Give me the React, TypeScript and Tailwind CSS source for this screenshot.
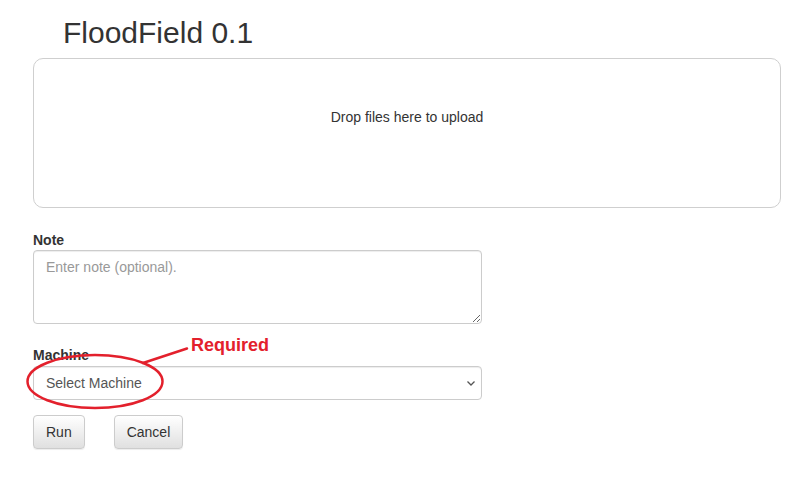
import React from 'react';

const Annotation = () => (
  <div className="pointer-events-none absolute inset-0">
    <svg className="absolute left-0 top-0" width="807" height="480" viewBox="0 0 807 480" fill="none">
      <ellipse cx="95" cy="381.5" rx="67.5" ry="26.5" stroke="#e3202c" strokeWidth="2.5" />
      <path d="M143 363 L187 348.5" stroke="#e3202c" strokeWidth="2.5" strokeLinecap="round" />
    </svg>
    <span className="absolute left-[191px] top-[334px] text-[18px] font-bold leading-[22px] text-[#e3202c]">
      Required
    </span>
  </div>
);

export default function App() {
  return (
    <div className="relative h-[480px] w-[807px] overflow-hidden bg-white font-['Liberation_Sans',Arial,sans-serif] text-[14px] text-[#333]">
      <div className="w-[748px] pl-[33px] box-content">
        <h1 className="mt-4 mb-[9px] pl-[30px] text-[30px] leading-[33px] font-normal text-[#333]">FloodField 0.1</h1>

        <div className="flex h-[150px] items-center justify-center rounded-[10px] border border-[#cfcfcf] pb-[32px]">
          <span className="text-[14px] text-[#333]">Drop files here to upload</span>
        </div>

        <div className="mt-[22px] w-[449px]">
          <label className="block text-[14px] font-bold leading-[20px] text-[#333]">Note</label>
          <textarea
            className="block h-[74px] w-full rounded-[4px] border border-[#ccc] px-3 py-[6px] text-[14px] leading-[20px] text-[#555] shadow-[inset_0_1px_1px_rgba(0,0,0,0.075)] outline-none placeholder:text-[#999]"
            placeholder="Enter note (optional)."
          />

          <label className="mt-[21px] block text-[14px] font-bold leading-[20px] text-[#333]">Machine</label>
          <div className="relative mt-[1px]">
            <select className="block h-[34px] w-full appearance-none rounded-[4px] border border-[#ccc] bg-white px-3 text-[14px] text-[#555] shadow-[inset_0_1px_1px_rgba(0,0,0,0.075)] outline-none">
              <option>Select Machine</option>
            </select>
            <svg className="absolute right-[6px] top-[13px]" width="10" height="8" viewBox="0 0 10 8" fill="none">
              <path d="M1.5 2.5 L5 6 L8.5 2.5" stroke="#555" strokeWidth="1.3" />
            </svg>
          </div>

          <div className="mt-[15px] flex gap-[29px]">
            <button className="h-[34px] rounded-[4px] border border-[#ccc] bg-gradient-to-b from-white to-[#e0e0e0] px-3 text-[14px] text-[#333] shadow-[0_1px_0_rgba(255,255,255,0.15)_inset,0_1px_1px_rgba(0,0,0,0.075)]">
              Run
            </button>
            <button className="h-[34px] rounded-[4px] border border-[#ccc] bg-gradient-to-b from-white to-[#e0e0e0] px-3 text-[14px] text-[#333] shadow-[0_1px_0_rgba(255,255,255,0.15)_inset,0_1px_1px_rgba(0,0,0,0.075)]">
              Cancel
            </button>
          </div>
        </div>
      </div>
      <Annotation />
    </div>
  );
}
